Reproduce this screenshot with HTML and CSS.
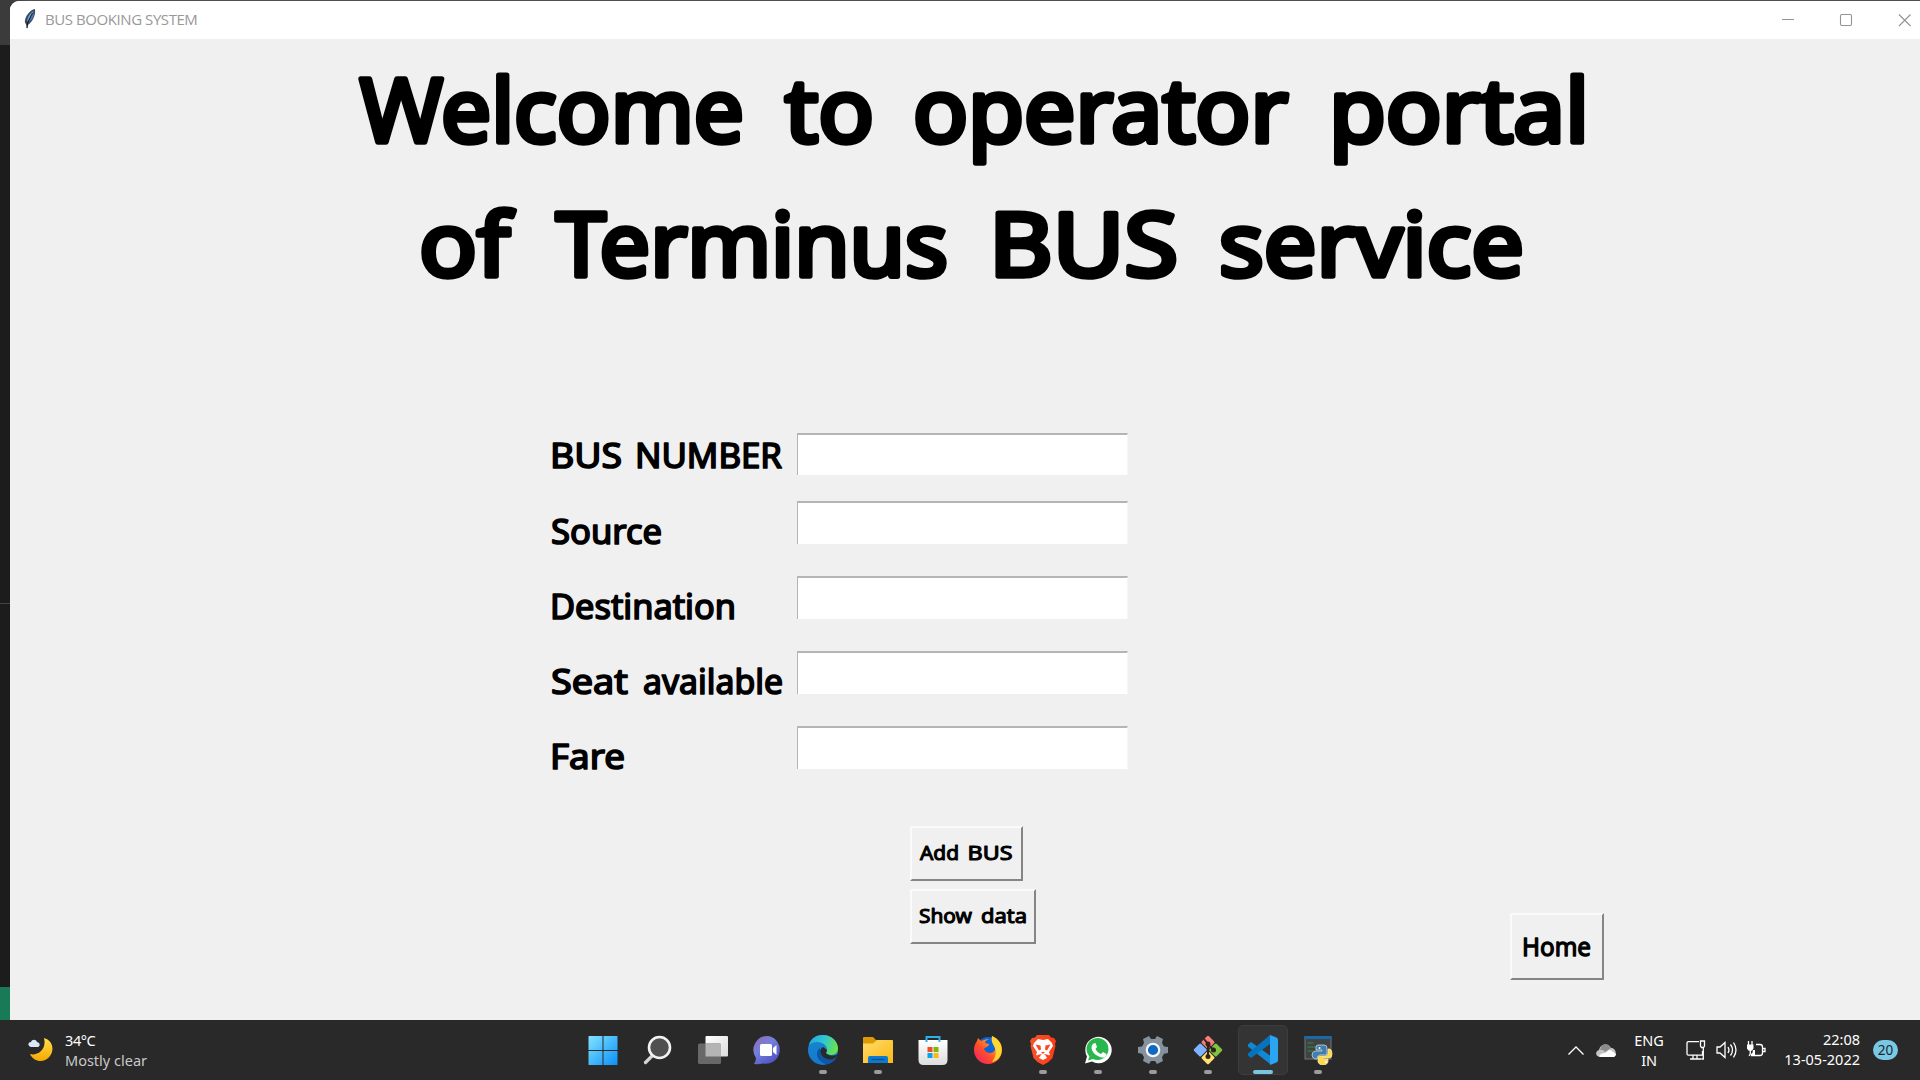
FILE: index.html
```html
<!DOCTYPE html>
<html lang="en">
<head>
<meta charset="utf-8">
<title>BUS BOOKING SYSTEM</title>
<link rel="stylesheet" href="styles.css">
</head>
<body>
<div class="desktop">
  <div class="backdrop"><div class="strip-top"></div><div class="strip-mid"></div><div class="strip-low"></div><div class="strip-green"></div></div>
  <main class="window">
    <header class="titlebar">
      <svg class="feather" width="12" height="21" viewBox="0 0 12 21"><path d="M11 0C6 1 1 7 .8 13l1.500 3L3 20l1-4C8 13 12 7 11 0Z" fill="#3a4a60"/><path d="M9.500 2C6 4 3 9 3 13l5-6Z" fill="#6ba2e2"/><path d="M10 4C10 8 7 12 4.500 13L8 7Z" fill="#4a80c4"/><path d="M8.500 4L3.500 14 3 19" stroke="#10141c" fill="none"/></svg>
      <span class="title">BUS BOOKING SYSTEM</span>
      <svg class="controls" width="130" height="14" viewBox="0 0 130 14"><path d="M0 6.500H12" /><rect x="58.500" y="1.500" width="11" height="11" rx="1.500"/><path d="M117 1.500l11.500 11.500M128.500 1.500L117 13"/></svg>
    </header>
    <h1 class="heading">
      <svg class="hand big" width="1910" height="330" viewBox="10 39 1910 330">
        <text y="142"><tspan x="360" textLength="384" lengthAdjust="spacingAndGlyphs">Welcome</tspan> <tspan x="785" textLength="89" lengthAdjust="spacingAndGlyphs">to</tspan> <tspan x="913" textLength="375" lengthAdjust="spacingAndGlyphs">operator</tspan> <tspan x="1329" textLength="260" lengthAdjust="spacingAndGlyphs">portal</tspan></text>
        <text y="275.500"><tspan x="419" textLength="91" lengthAdjust="spacingAndGlyphs">of</tspan> <tspan x="556" textLength="392" lengthAdjust="spacingAndGlyphs">Terminus</tspan> <tspan x="989" textLength="189" lengthAdjust="spacingAndGlyphs">BUS</tspan> <tspan x="1219" textLength="305" lengthAdjust="spacingAndGlyphs">service</tspan></text>
      </svg>
    </h1>
    <form class="form">
      <div class="row"><label for="num"><svg class="hand mid" width="247" height="42" viewBox="550 433 247 42"><text y="468"><tspan x="550" textLength="72" lengthAdjust="spacingAndGlyphs">BUS</tspan> <tspan x="635" textLength="147" lengthAdjust="spacingAndGlyphs">NUMBER</tspan></text></svg></label><input id="num"></div>
      <div class="row"><label for="src"><svg class="hand mid" width="247" height="43" viewBox="550 501 247 43"><text y="543.500"><tspan x="551" textLength="111" lengthAdjust="spacingAndGlyphs">Source</tspan></text></svg></label><input id="src"></div>
      <div class="row"><label for="dst"><svg class="hand mid" width="247" height="43" viewBox="550 576 247 43"><text y="618.500"><tspan x="550" textLength="186" lengthAdjust="spacingAndGlyphs">Destination</tspan></text></svg></label><input id="dst"></div>
      <div class="row"><label for="seat"><svg class="hand mid" width="247" height="43" viewBox="550 651 247 43"><text y="693.500"><tspan x="551" textLength="77" lengthAdjust="spacingAndGlyphs">Seat</tspan> <tspan x="643" textLength="140" lengthAdjust="spacingAndGlyphs">available</tspan></text></svg></label><input id="seat"></div>
      <div class="row"><label for="fare"><svg class="hand mid" width="247" height="43" viewBox="550 726 247 43"><text y="768.500"><tspan x="550" textLength="75" lengthAdjust="spacingAndGlyphs">Fare</tspan></text></svg></label><input id="fare"></div>
    </form>
    <div class="actions">
      <div class="stack">
        <button class="add"><svg class="hand small" width="109" height="51" viewBox="912 828 109 51"><text y="860"><tspan x="920" textLength="39" lengthAdjust="spacingAndGlyphs">Add</tspan> <tspan x="967.500" textLength="45" lengthAdjust="spacingAndGlyphs">BUS</tspan></text></svg></button>
        <button class="show"><svg class="hand small" width="122" height="51" viewBox="912 891 122 51"><text y="923"><tspan x="919" textLength="53" lengthAdjust="spacingAndGlyphs">Show</tspan> <tspan x="981" textLength="46" lengthAdjust="spacingAndGlyphs">data</tspan></text></svg></button>
      </div>
      <button class="home"><svg class="hand medium" width="90" height="63" viewBox="1512 915 90 63"><text y="956"><tspan x="1522" textLength="69" lengthAdjust="spacingAndGlyphs">Home</tspan></text></svg></button>
    </div>
  </main>
</div>

<footer class="taskbar">
  <div class="weather">
    <svg width="26" height="26" viewBox="0 0 26 26"><defs><linearGradient id="moon" x2="0" y2="1"><stop stop-color="#ffe04a"/><stop offset="1" stop-color="#f5a800"/></linearGradient></defs><path d="M16 1C24 3 27 12 22 19 17 26 6 26 2 17 9 19 19 13 16 1Z" fill="url(#moon)"/><path d="M3 10C-1 9 0 5 3 5 4 2 8 2 9 5 13 6 12 10 9 10Z" fill="#d9e8f8"/></svg>
    <div class="forecast"><span class="temp">34°C</span><span>Mostly clear</span></div>
  </div>
  <nav class="apps">
    <div class="app"><svg viewBox="0 0 30 30"><defs><linearGradient id="win" x2="1" y2="1"><stop stop-color="#83e3ff"/><stop offset="1" stop-color="#0a8ff8"/></linearGradient></defs><path fill="url(#win)" d="M.5 1.500q0-.5.5-.5h13.500v14H.5ZM15.500 1H29q.5 0 .5.5V15h-14ZM.5 16h14v14H1q-.5 0-.5-.5ZM15.500 16h14v13.500q0 .5-.5.5H15.500Z"/></svg></div>
    <div class="app"><svg viewBox="0 0 30 30"><path d="M2.500 27.500L10 20" stroke="#d3d7da" stroke-width="3.200" stroke-linecap="round"/><circle cx="16.500" cy="12.500" r="10.500" fill="#505050" stroke="#f0f2f3" stroke-width="2.600"/></svg></div>
    <div class="app"><svg viewBox="0 0 30 30"><defs><linearGradient id="tv" x2="1" y2="1"><stop stop-color="#fff"/><stop offset="1" stop-color="#ddd"/></linearGradient></defs><rect x="7.500" y="1" width="22.500" height="20.500" rx="1" fill="url(#tv)"/><rect x="0" y="8.500" width="23" height="20.500" rx="1.500" fill="#686868"/><path d="M7.500 8.500H22q1 0 1 1v12H7.500Z" fill="#b4b4b4"/></svg></div>
    <div class="app"><svg viewBox="0 0 30 30"><defs><linearGradient id="chat" x2=".7" y2="1"><stop stop-color="#9a63b5"/><stop offset=".45" stop-color="#7480dc"/><stop offset="1" stop-color="#5051c4"/></linearGradient></defs><path d="M15.500 1A14 14 0 1 1 10 28.500Q6 29.500 1 29q2-2.500 2-6A14 14 0 0 1 15.500 1Z" fill="url(#chat)"/><rect x="7" y="9" width="12" height="12" rx="1.500" fill="#fff"/><path d="M20 13l3.500-3v10L20 17Z" fill="#fff"/></svg></div>
    <div class="app running"><svg viewBox="0 0 30 30"><defs><linearGradient id="edge" y1=".2" x2="1" y2=".5"><stop stop-color="#20a8e0"/><stop offset=".5" stop-color="#30c8d0"/><stop offset="1" stop-color="#6ae34c"/></linearGradient><linearGradient id="edge2" x2=".3" y2="1"><stop stop-color="#1687d3"/><stop offset="1" stop-color="#1678ca"/></linearGradient></defs><circle cx="15" cy="15" r="15" fill="url(#edge2)"/><path d="M.8 10C3 3 8 0 15 0 24 0 30 7 30 13 30 20 24 21 19 19 17 18 19 17 19 14 18 9 13 7 9 7 5 7 2 9 .8 10Z" fill="url(#edge)"/><path d="M12 13C6 18 10 27 19 29 23 28 26 26 28 23 23 25 13 24 12 13Z" fill="#0a4f9d"/><path d="M15 12c-4 2-4 10 5 12 4 1 8-1 8-2l2-3c-3 2-8 2-11 0-2-1 0-2 0-4Z" fill="#292929"/><path d="M12 14c0 7 5 11 10 11 4 0 5-2 6-2-2 4-6 6-10 6C11 27 9 19 12 14Z" fill="#0d58a8"/></svg></div>
    <div class="app running"><svg viewBox="0 0 30 30"><defs><linearGradient id="fold" x2="1" y2="1"><stop stop-color="#ffdc6a"/><stop offset="1" stop-color="#fbb814"/></linearGradient></defs><path d="M0 10V3q0-1 1-1h9l3 3h3v5Z" fill="#dd9a05"/><path d="M0 8.500h10L14 5h15q1 0 1 1v22H0Z" fill="url(#fold)"/><path d="M5 28v-5q0-2 2-2h16q2 0 2 2v5Z" fill="#0b7bd0"/><path d="M8.500 24.500h13" stroke="#084d8d" stroke-width="1.300"/></svg></div>
    <div class="app"><svg viewBox="0 0 30 30"><defs><linearGradient id="bag" x2="0" y2="1"><stop stop-color="#fff"/><stop offset="1" stop-color="#ddd"/></linearGradient></defs><path d="M.5 5h29v20q0 5-5 5h-19q-5 0-5-5Z" fill="url(#bag)"/><path d="M8.500 7V2h13v5" fill="none" stroke="#2bb2e8" stroke-width="2"/><path fill="#f04e22" d="M9.500 12h5v5h-5Z"/><path fill="#7db70a" d="M15.500 12h5v5h-5Z"/><path fill="#08a3ef" d="M9.500 18h5v5h-5Z"/><path fill="#fdb813" d="M15.500 18h5v5h-5Z"/></svg></div>
    <div class="app"><svg viewBox="0 0 30 30"><defs><linearGradient id="fox" y1="1" x2="1" y2="0"><stop stop-color="#ec1a72"/><stop offset=".4" stop-color="#ff4b2d"/><stop offset=".7" stop-color="#ff9a1e"/><stop offset="1" stop-color="#ffe63b"/></linearGradient></defs><circle cx="15" cy="14" r="12" fill="#0a64d8"/><path d="M4 6l1-3 3 3 3-1c2-1 4-1 5-1-3 1-4 3-4 4l4 1c0 3-4 3-5 5 2 5 9 5 11 1 2-5-1-8-3-9V1c7 3 10 8 10 14A13.800 13.800 0 0 1 1 15C1 11 2 9 4 6Z" fill="url(#fox)"/><path d="M19 1c7 4 10 8 9.500 15C28 23 23 26 19 27c4-5 5-10 2-16-2-3-3-6-2-10Z" fill="#ffd534"/></svg></div>
    <div class="app running"><svg viewBox="0 0 30 30"><defs><linearGradient id="lion" x2="1"><stop stop-color="#f6532d"/><stop offset="1" stop-color="#ff3a12"/></linearGradient></defs><path d="M9 0h12l2 2.500 3 .5 2 3-1 3 .5 2-3 12-4 4-5.500 3-5.500-3-4-4-3-12 .5-2-1-3 2-3 3-.5Z" fill="url(#lion)"/><path d="M10 4l5 1 5-1 4 4 1 3-4 6 1 3-4 1 1 2-4 2-4-2 1-2-4-1 1-3-4-6 1-3Z" fill="#fff"/><path d="M7.500 9.500l5 1 .5 4-2 1Zm15 0l-5 1-.5 4 2 1ZM13 17h4l-2 2ZM9 20l5-1-3 3Zm12 0l-5-1 3 3Z" fill="#fa4721"/></svg></div>
    <div class="app running"><svg viewBox="0 0 30 30"><path d="M2 28.500l2-7A13.200 13.200 0 1 1 9 26.500Z" fill="#fff"/><path d="M5 25.500l1.500-4A11 11 0 1 1 10 24Z" fill="#29b84e"/><path d="M10.500 8.500l2-.5 1.500 4-1.500 2q2 4 5.500 5l2-2 3.500 2c0 3-3 4-5 3.500-6-1.500-10-6-10-10q0-3 2-4Z" fill="#fff"/></svg></div>
    <div class="app running"><svg viewBox="0 0 30 30"><path d="M11 1l2 3h4l2-3 6 3-1 4 2 3.500 4 .5v6l-4 .7-2 3.500 1 3.800-6 3-2-3h-4l-2 3-6-3 1-3.800-2-3.500-4-.7v-6l4-.5L6 8 5 4Z" fill="#85919c"/><circle cx="15" cy="15" r="6.200" fill="#1168c0" stroke="#f5f7f9" stroke-width="2.200"/></svg></div>
    <div class="app running"><svg viewBox="0 0 30 30"><g transform="rotate(45 15 15)"><rect x="4.500" y="4.500" width="10" height="10" rx="1.500" fill="#f77d7d"/><rect x="15.500" y="4.500" width="10" height="10" rx="1.500" fill="#80c342"/><rect x="4.500" y="15.500" width="10" height="10" rx="1.500" fill="#80b3ff"/><rect x="15.500" y="15.500" width="10" height="10" rx="1.500" fill="#ffe070"/></g><path d="M11 4l4 5v13M15 10l6 5" stroke="#30221c" stroke-width="2" fill="none"/><g fill="#30221c"><circle cx="15" cy="9" r="2.500"/><circle cx="20.500" cy="15" r="2.500"/><circle cx="15" cy="21.500" r="2.500"/></g></svg></div>
    <div class="app running active"><svg viewBox="0 0 30 30"><path d="M3 7L0 9.500v2L22 29V20.500Z" fill="#1287d3"/><path d="M3 23L0 20.500v-2L22 0V9Z" fill="#0873bd"/><path d="M22 0l6.500 2.500Q30 3 30 5v20q0 2-1.500 2.500L22 30Z" fill="#2ba4f2"/></svg></div>
    <div class="app running"><svg viewBox="0 0 30 30"><rect x="2" y="1.500" width="26" height="22.500" fill="#404344" stroke="#777"/><path d="M1.500 1h27v3h-27Z" fill="#1b68a5"/><path d="M4.500 8h6M4.500 12h9M4.500 16h6" stroke="#348b3e" stroke-width="1.200"/><path d="M15 10h6q3 0 3 3v5q0 2-2 2h-5q-3 0-3 4h-2q-3-1-3-4t3-4h7v-1h-6v-3q0-2 2-2Z" fill="#3f7eae" stroke="#dde6ea" stroke-width=".7"/><path d="M25 14h2q2 1 2 5t-3 4h-6v1h5v3q-1 3-5 3t-5-3v-4q0-2 2-2h5q3 0 3-3Z" fill="#ffda45" stroke="#f4edcf" stroke-width=".7"/><circle cx="16.500" cy="13" r="1" fill="#fff"/><circle cx="23" cy="27" r="1" fill="#fff"/></svg></div>
  </nav>
  <div class="tray">
    <svg class="chevron" width="16" height="9" viewBox="0 0 16 9"><path d="M.5 8.500L8 1l7.500 7.500" fill="none" stroke="#fff" stroke-width="1.300"/></svg>
    <svg class="cloud" width="20" height="13" viewBox="0 0 20 13"><path d="M4 13C-1 13-1 7 3 6 4 0 12-2 15 4c6 0 6 9 2 9Z" fill="#c4c4c4"/><path d="M4 6q3-1 5 2l6-4q-2-4-6-4-4 1-5 6Z" fill="#8b8b8b"/><path d="M3 12q2-3 6-3l4-3q3 0 4 2 3 1 3 3l-2 2H4Z" fill="#fff"/></svg>
    <div class="lang"><span>ENG</span><span>IN</span></div>
    <svg class="status" width="80" height="20" viewBox="0 0 80 20"><g fill="none" stroke="#fff" stroke-width="1.300"><path d="M13 1.700H2.500q-1.500 0-1.500 1.500v10.500q0 1.500 1.500 1.500H15.500q1 0 1-1V11M7 15v4M11 15v4M4 19h11M14.500 1h4v5l-1 1.500h-2l-1-1.500ZM17.300 8v11h-2"/><path d="M31 7h3l5-4.500v15L34 13h-3ZM42 7q2 3 0 6M44.500 4.500q4 5.500 0 11M47.500 2.500q5 7.500 0 15"/><path d="M70 4.500h4q2.500 0 2.500 2.500v6q0 2.500-2.500 2.500H65M62.500 1v4M66 1v4M64.300 9v4q0 2.500-1.500 2.500M77 8.500h2v3h-2"/></g><path d="M61 4.500h6.500v4q-1 2.500-3.200 2.500T61 8.500ZM65 14q2-1 2-4h2v5h-4Z" fill="#fff"/></svg>
    <div class="clock"><span>22:08</span><span>13-05-2022</span></div>
    <div class="badge">20</div>
  </div>
</footer>
</body>
</html>
```
FILE: styles.css
```css
* { box-sizing: border-box; }
body {
  margin: 0;
  width: 1920px;
  height: 1080px;
  overflow: hidden;
  background: #292929;
  font-family: "Noto Sans", "Open Sans", sans-serif;
}
.desktop {
  display: flex;
  height: 1020px;
  padding-top: 1px;
  background: linear-gradient(90deg, #3b3b3b 10px, #505050 30px);
}
.backdrop { width: 10px; display: flex; flex-direction: column; }
.strip-top { height: 44px; background: #3b3b3b; }
.strip-mid { height: 559px; background: #1c1c1c; border-bottom: 1px solid #444; }
.strip-low { height: 383px; background: #1c1c1c; }
.strip-green { flex: 1; background: #187a56; }
.window {
  flex: 1;
  display: flex;
  flex-direction: column;
  background: #f0f0f0;
  border-top-left-radius: 9px;
  overflow: hidden;
}
.titlebar {
  display: flex;
  align-items: center;
  flex: none;
  height: 38px;
  padding: 0 8px 0 14px;
  background: #fff;
}
.feather { margin-top: -2px; }
.title { margin: -2px 0 0 9px; font: 15px "Open Sans", sans-serif; letter-spacing: -0.43px; color: #999; }
.controls { margin-left: auto; fill: none; stroke: #939393; stroke-width: 1.1; }
.heading { margin: 0; height: 394px; }

.hand {
  display: block;
  overflow: visible;
  font-family: "Comic Sans MS", "Noto Sans", sans-serif;
  font-weight: 400;
  fill: #000;
  stroke: #000;
  stroke-linejoin: round;
}
.big { font-size: 88px; stroke-width: 5.5px; }
.mid { font-size: 35px; stroke-width: 1.7px; }
.small { font-size: 20.5px; stroke-width: 1.1px; }
.medium { font-size: 26px; stroke-width: 1.3px; }

.form { display: flex; flex-direction: column; gap: 32px; padding-left: 540px; }
.row { display: flex; height: 43px; }
.row:first-child { height: 42px; margin-bottom: -6px; }
.row input {
  width: 331px;
  height: 100%;
  padding: 0 4px;
  background: #fff;
  border: solid #b5b5b5;
  border-width: 2px 0 0 1px;
  border-right: 1px solid #f6f6f6;
  outline: none;
}
.actions {
  display: flex;
  justify-content: space-between;
  margin-top: 57px;
  padding: 0 316px 0 900px;
}
.stack { display: flex; flex-direction: column; align-items: flex-start; gap: 8px; }
button {
  display: block;
  padding: 0;
  background: #f0f0f0;
  border: 2px solid;
  border-color: #fafafa #858585 #858585 #fafafa;
}
.home { margin-top: 87px; height: 67px; }

.taskbar {
  display: flex;
  height: 60px;
  background: #292929;
  color: #fff;
  font-size: 14.5px;
  line-height: 20px;
}
.weather { display: flex; width: 575px; padding: 17px 0 0 28px; }
.forecast { display: flex; flex-direction: column; margin: -7px 0 0 11px; color: #c8c8c8; }
.temp { color: #fff; letter-spacing: -0.4px; }
.apps { display: flex; width: 770px; }
.app {
  width: 55px;
  height: 60px;
  display: grid;
  grid-template-rows: 30px 4px;
  row-gap: 5px;
  justify-items: center;
  padding-top: 15px;
}
.app svg { width: 30px; height: 30px; }
.running::after { content: ""; width: 8px; height: 4px; border-radius: 2px; background: #9c9c9c; }
.active {
  width: 50px;
  height: 50px;
  margin: 5px 2px 0 3px;
  padding-top: 9px;
  border: 1px solid #3d3d3d;
  border-radius: 5px;
  background: #343434;
}
.active::after { width: 20px; background: #7ac5e0; }
.tray { display: flex; flex: 1; align-items: center; padding-left: 223px; }
.cloud { margin-left: 12px; }
.lang { display: flex; flex-direction: column; align-items: center; width: 40px; margin: -1px 0 0 13px; letter-spacing: -0.1px; }
.status { margin-left: 17px; }
.clock { display: flex; flex-direction: column; align-items: flex-end; width: 94px; margin-top: -2px; }
.badge {
  width: 25px;
  height: 20px;
  margin-left: 13px;
  border-radius: 10px;
  background: #7ac8e5;
  color: #17272d;
  text-align: center;
  font-size: 13.5px;
}
```
